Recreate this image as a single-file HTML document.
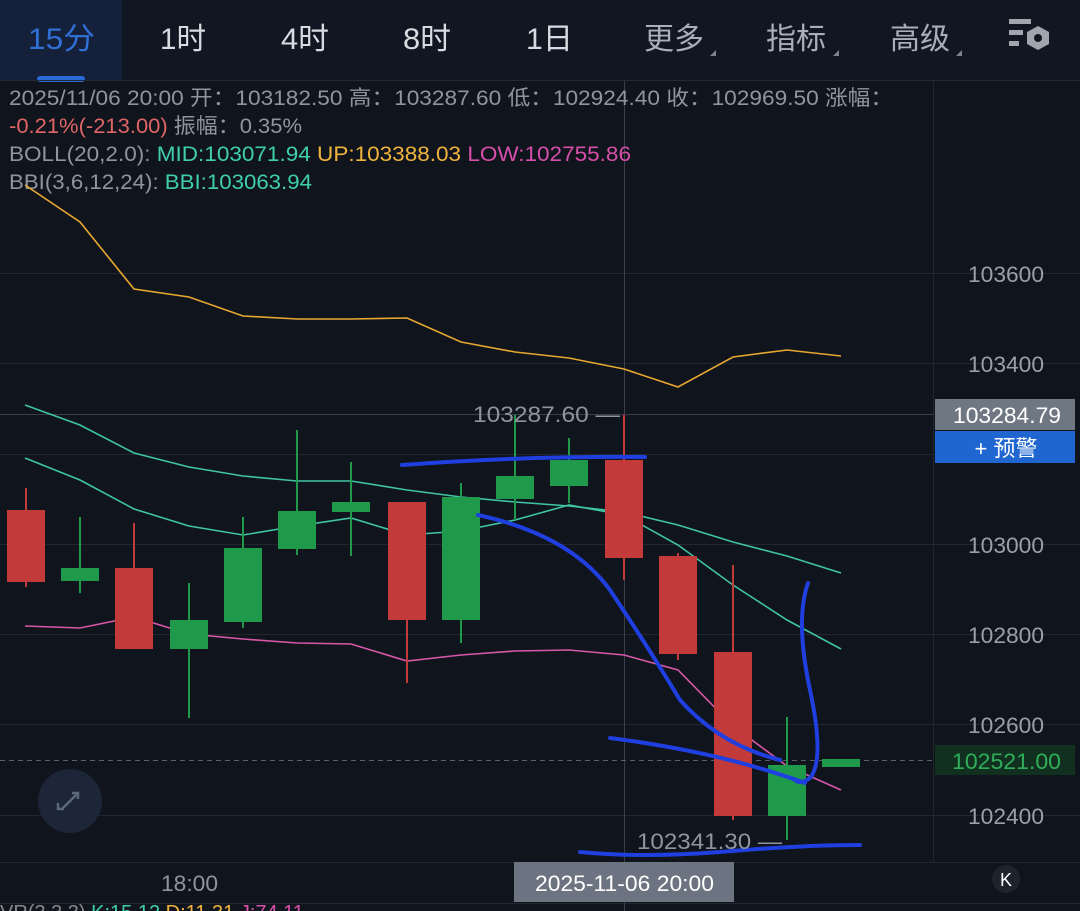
<!DOCTYPE html>
<html><head><meta charset="utf-8"><style>
html,body{margin:0;padding:0;background:#10141d;width:1080px;height:911px;overflow:hidden;font-family:"Liberation Sans","Noto Sans CJK SC",sans-serif}
svg{display:block}
</style></head><body>
<svg width="1080" height="911" xmlns="http://www.w3.org/2000/svg" font-family="Liberation Sans, Noto Sans CJK SC, sans-serif">
<rect width="1080" height="911" fill="#10141d"/>
<rect width="1080" height="80" fill="#111722"/>
<rect x="0" y="0" width="122" height="80" fill="#15203a"/>
<rect x="37" y="76" width="48" height="6" rx="3" fill="#2a6ad8"/>
<line x1="0" y1="80.5" x2="1080" y2="80.5" stroke="#252b36"/>
<g font-size="30" fill="#d8dce2">
<text x="28" y="49" fill="#2f6fd6" textLength="67" lengthAdjust="spacingAndGlyphs">15分</text>
<text x="160" y="49" textLength="46" lengthAdjust="spacingAndGlyphs">1时</text>
<text x="281" y="49" textLength="48" lengthAdjust="spacingAndGlyphs">4时</text>
<text x="403" y="49" textLength="48" lengthAdjust="spacingAndGlyphs">8时</text>
<text x="526" y="49" textLength="47" lengthAdjust="spacingAndGlyphs">1日</text>
<text x="644" y="49" fill="#a9afb8">更多</text>
<text x="766" y="49" fill="#a9afb8">指标</text>
<text x="890" y="49" fill="#a9afb8">高级</text>
</g>
<g fill="#7d838c"><path d="M710 56l6 -6v6z"/><path d="M833 56l6 -6v6z"/><path d="M956 56l6 -6v6z"/></g>
<g fill="#a0a6ae"><rect x="1009" y="19" width="22" height="5"/><rect x="1009" y="30" width="14" height="5"/><rect x="1009" y="41" width="10" height="5"/><path d="M1038 26l11 6v12l-11 6-11-6v-12z"/><circle cx="1038" cy="38" r="4" fill="#111722"/></g>
<g stroke="#22272f" stroke-width="1">
<line x1="0" y1="273.5" x2="1080" y2="273.5"/><line x1="0" y1="363.5" x2="1080" y2="363.5"/><line x1="0" y1="454.5" x2="933" y2="454.5"/><line x1="0" y1="544.5" x2="1080" y2="544.5"/><line x1="0" y1="634.5" x2="1080" y2="634.5"/><line x1="0" y1="724.5" x2="1080" y2="724.5"/><line x1="0" y1="815.5" x2="1080" y2="815.5"/>
<line x1="933.5" y1="81" x2="933.5" y2="862"/><line x1="0" y1="862.5" x2="1080" y2="862.5"/><line x1="0" y1="903.5" x2="1080" y2="903.5"/>
</g>
<line x1="624.5" y1="81" x2="624.5" y2="911" stroke="#3a404a"/>
<line x1="0" y1="414.5" x2="933" y2="414.5" stroke="#3a404a"/>
<line x1="0" y1="760.5" x2="933" y2="760.5" stroke="#5a606a" stroke-dasharray="5 4"/>
<g font-size="21" fill="#8f959e" lengthAdjust="spacingAndGlyphs">
<text x="9" y="105" textLength="884" lengthAdjust="spacingAndGlyphs">2025/11/06 20:00 开：103182.50 高：103287.60 低：102924.40 收：102969.50 涨幅：</text>
<text x="9" y="133" textLength="293" lengthAdjust="spacingAndGlyphs"><tspan fill="#e06565">-0.21%(-213.00)</tspan> 振幅：0.35%</text>
<text x="9" y="161" textLength="622" lengthAdjust="spacingAndGlyphs">BOLL(20,2.0): <tspan fill="#3fcfae">MID:103071.94</tspan> <tspan fill="#f0b43c">UP:103388.03</tspan> <tspan fill="#d64fa8">LOW:102755.86</tspan></text>
<text x="9" y="189" textLength="303" lengthAdjust="spacingAndGlyphs">BBI(3,6,12,24): <tspan fill="#3fcfae">BBI:103063.94</tspan></text>
</g>
<g fill="none" stroke-width="1.6">
<polyline stroke="#e8a830" points="25,185 80,222 134,289 189,297 243,316 297,319 351,319 407,318 461,342 515,352 569,358 624,369 678,387 733,357 787,350 841,356"/>
<polyline stroke="#3fc5a5" points="25,405 80,425 134,453 189,467 243,476 297,481 351,481 407,490 461,497 515,502 569,506 624,512 678,525 733,542 787,556 841,573"/>
<polyline stroke="#3fc5a5" points="25,458 80,480 134,509 189,526 243,535 297,526 351,518 407,535 461,531 515,520 569,505 624,515 678,545 733,585 787,620 841,649"/>
<polyline stroke="#d658a8" points="25,626 80,628 134,617 189,634 243,639 297,643 351,644 407,661 461,655 515,651 569,650 624,655 678,670 733,726 787,766 841,790"/>
</g>
<g stroke-width="2">
<g stroke="#c23a3a" fill="#c23a3a">
<line x1="26" y1="488" x2="26" y2="587"/><rect x="8" y="511" width="36" height="70"/>
<line x1="134" y1="523" x2="134" y2="648"/><rect x="116" y="569" width="36" height="79"/>
<line x1="407" y1="503" x2="407" y2="683"/><rect x="389" y="503" width="36" height="116"/>
<line x1="624" y1="415" x2="624" y2="580"/><rect x="606" y="461" width="36" height="96"/>
<line x1="678" y1="553" x2="678" y2="660"/><rect x="660" y="557" width="36" height="96"/>
<line x1="733" y1="565" x2="733" y2="820"/><rect x="715" y="653" width="36" height="162"/>
</g>
<g stroke="#1f9a4a" fill="#1f9a4a">
<line x1="80" y1="517" x2="80" y2="593"/><rect x="62" y="569" width="36" height="11"/>
<line x1="189" y1="583" x2="189" y2="718"/><rect x="171" y="621" width="36" height="27"/>
<line x1="243" y1="517" x2="243" y2="628"/><rect x="225" y="549" width="36" height="72"/>
<line x1="297" y1="430" x2="297" y2="555"/><rect x="279" y="512" width="36" height="36"/>
<line x1="351" y1="462" x2="351" y2="556"/><rect x="333" y="503" width="36" height="8"/>
<line x1="461" y1="483" x2="461" y2="643"/><rect x="443" y="498" width="36" height="121"/>
<line x1="515" y1="415" x2="515" y2="520"/><rect x="497" y="477" width="36" height="21"/>
<line x1="569" y1="438" x2="569" y2="503"/><rect x="551" y="461" width="36" height="24"/>
<line x1="787" y1="717" x2="787" y2="840"/><rect x="769" y="766" width="36" height="49"/>
<rect x="823" y="760" width="36" height="6"/>
</g>
</g>
<g fill="none" stroke="#1f3fe0" stroke-width="4" stroke-linecap="round">
<path d="M402 465 Q520 456 645 457"/>
<path d="M478 515 Q570 535 610 590 Q650 650 680 700 Q720 745 780 760"/>
<path d="M610 738 Q720 752 805 783"/>
<path d="M808 583 Q795 620 810 690 Q825 760 810 778 Q800 785 795 780"/>
<path d="M580 852 Q640 858 720 852 Q800 845 860 845"/>
</g>
<g font-size="22" fill="#8f959e">
<text x="473" y="422" textLength="147" lengthAdjust="spacingAndGlyphs">103287.60 —</text>
<text x="637" y="849" textLength="145" lengthAdjust="spacingAndGlyphs">102341.30 —</text>
<text x="161" y="891" textLength="57" lengthAdjust="spacingAndGlyphs">18:00</text>
</g>
<g font-size="22" fill="#9aa0a8">
<text x="968" y="282" textLength="76" lengthAdjust="spacingAndGlyphs">103600</text><text x="968" y="372" textLength="76" lengthAdjust="spacingAndGlyphs">103400</text><text x="968" y="553" textLength="76" lengthAdjust="spacingAndGlyphs">103000</text><text x="968" y="643" textLength="76" lengthAdjust="spacingAndGlyphs">102800</text><text x="968" y="733" textLength="76" lengthAdjust="spacingAndGlyphs">102600</text><text x="968" y="824" textLength="76" lengthAdjust="spacingAndGlyphs">102400</text>
</g>
<rect x="935" y="399" width="140" height="31" fill="#6e7782"/>
<text x="953" y="423" font-size="22" fill="#fff" textLength="108" lengthAdjust="spacingAndGlyphs">103284.79</text>
<rect x="935" y="431" width="140" height="32" fill="#1f66d0"/>
<text x="1006" y="456" font-size="22" fill="#fff" text-anchor="middle">+ 预警</text>
<rect x="935" y="745" width="140" height="30" fill="#12301f"/>
<text x="952" y="769" font-size="22" fill="#2fae5a" textLength="109" lengthAdjust="spacingAndGlyphs">102521.00</text>
<rect x="514" y="862" width="220" height="40" fill="#6b7480"/>
<text x="535" y="891" font-size="22" fill="#fff" textLength="179" lengthAdjust="spacingAndGlyphs">2025-11-06 20:00</text>
<circle cx="70" cy="801" r="32" fill="#1c2638"/>
<g stroke="#5d6878" stroke-width="2.5" fill="none"><path d="M62 809l16-16M72 793h6v6M58 803v6h6"/></g>
<ellipse cx="1006" cy="879" rx="14" ry="14" fill="#1f242c"/>
<text x="1006" y="886" font-size="18" fill="#fff" text-anchor="middle">K</text>
<text x="0" y="919" font-size="20" fill="#888">VR(3,3,3) <tspan fill="#3fcfae">K:15.12</tspan> <tspan fill="#f0b43c">D:11.31</tspan> <tspan fill="#d64fa8">J:74.11</tspan></text>
</svg>
</body></html>
